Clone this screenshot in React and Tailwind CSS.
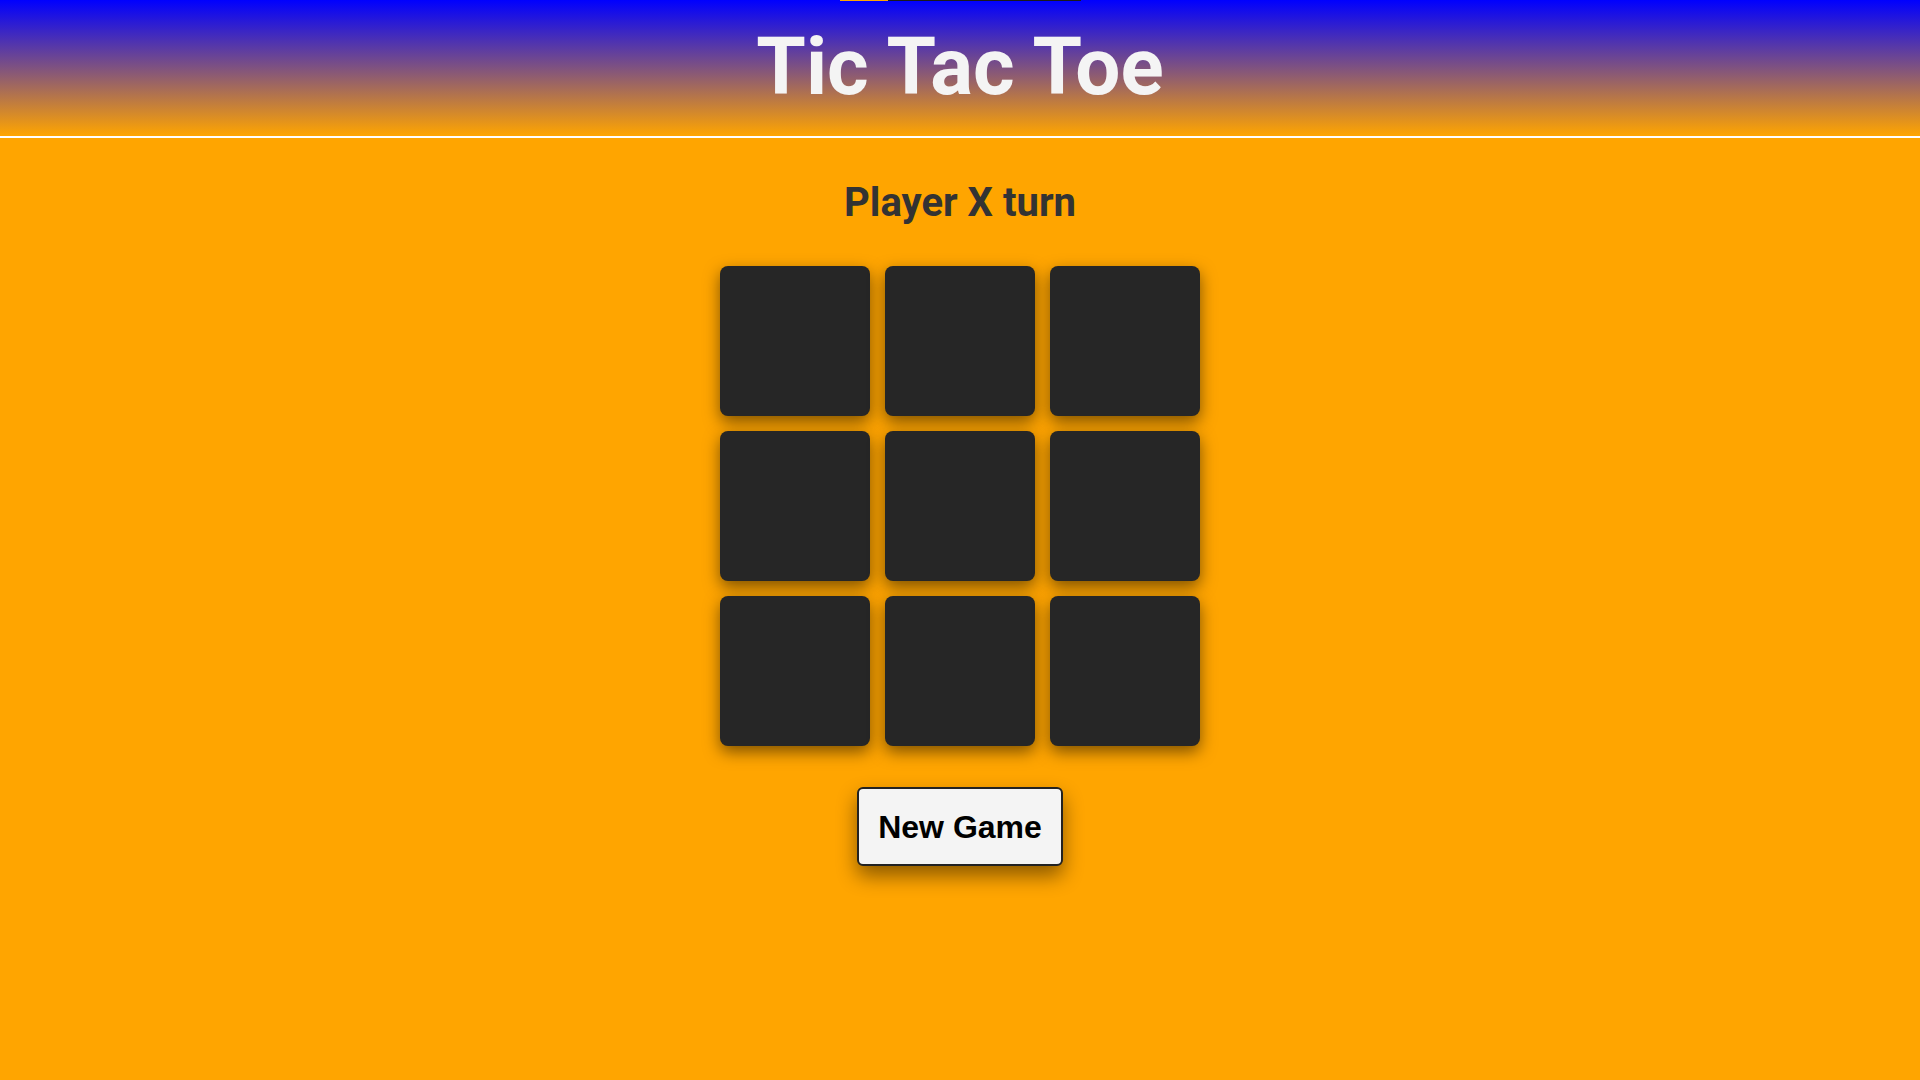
import React, { useState } from 'react';

const App = () => {
  const [board, setBoard] = useState(Array(9).fill(null));
  const [player, setPlayer] = useState('X');

  const play = (i) => {
    if (board[i]) return;
    const next = [...board];
    next[i] = player;
    setBoard(next);
    setPlayer(player === 'X' ? 'O' : 'X');
  };

  const reset = () => {
    setBoard(Array(9).fill(null));
    setPlayer('X');
  };

  return (
    <div className="min-h-screen bg-[#ffa500] font-['Roboto',sans-serif]">
      <header className="relative h-[138px] border-b-2 border-white bg-[linear-gradient(#0000ff,#ffa500)] pt-[7px]">
        <div className="absolute top-0 left-[840px] flex h-px">
          <div className="w-[48px] bg-[#ffa500]" />
          <div className="w-[193px] bg-[#1a1a1a]" />
        </div>
        <h1 className="text-center text-[80px] font-bold leading-normal text-[#f4f4f4]">Tic Tac Toe</h1>
      </header>
      <main className="flex flex-col items-center pt-[35px]">
        <h2 className="text-[40px] font-bold leading-normal text-[#333333]">Player {player} turn</h2>
        <div className="mt-[33px] grid grid-cols-[repeat(3,150px)] gap-[15px]">
          {board.map((cell, i) => (
            <button
              key={i}
              onClick={() => play(i)}
              className="h-[150px] w-[150px] rounded-lg bg-[#262626] text-6xl font-bold text-[#f4f4f4] shadow-[0_6px_16px_rgba(0,0,0,0.5)]"
            >
              {cell}
            </button>
          ))}
        </div>
        <button
          onClick={reset}
          className="mt-[41px] h-[79px] w-[206px] rounded-md border-2 border-[#222222] bg-[#f4f4f4] font-['Liberation_Sans',Arial,sans-serif] text-[32px] font-bold text-black shadow-[0_10px_20px_rgba(0,0,0,0.45)]"
        >
          New Game
        </button>
      </main>
    </div>
  );
};

export default App;
